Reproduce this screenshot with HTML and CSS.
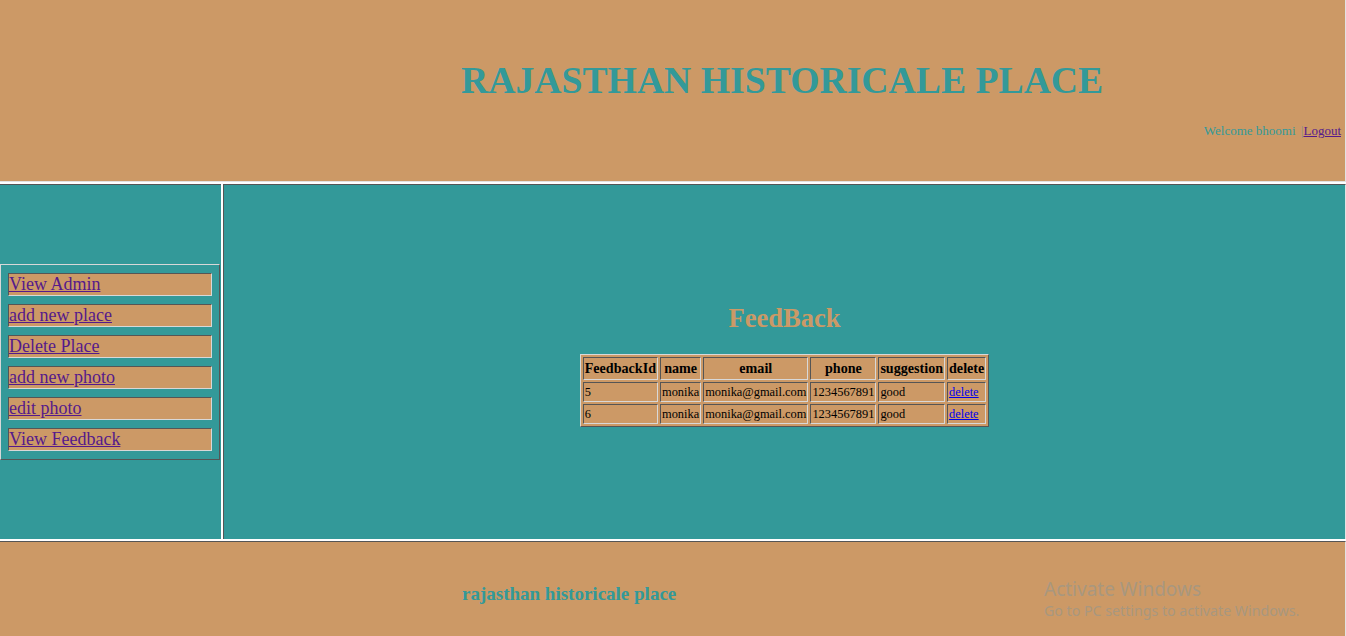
FILE: index.html
```html
<!DOCTYPE html>
<html>
<head>
<meta charset="utf-8">
<title>Rajasthan Historicale Place</title>
<link rel="stylesheet" href="styles.css">
</head>
<body>
<div class="page">
  <header class="header">
    <h1 class="site-title">RAJASTHAN HISTORICALE PLACE</h1>
    <div class="welcome">Welcome bhoomi <span class="sep">|</span><a href="#" class="logout">Logout</a></div>
  </header>
  <div class="middle">
    <aside class="side">
      <nav class="menu">
        <div class="menu-item"><a href="#">View Admin</a></div>
        <div class="menu-item"><a href="#">add new place</a></div>
        <div class="menu-item"><a href="#">Delete Place</a></div>
        <div class="menu-item"><a href="#">add new photo</a></div>
        <div class="menu-item"><a href="#">edit photo</a></div>
        <div class="menu-item"><a href="#">View Feedback</a></div>
      </nav>
    </aside>
    <main class="content">
      <h2 class="content-title">FeedBack</h2>
      <table class="fb">
        <thead>
          <tr><th>FeedbackId</th><th>name</th><th>email</th><th>phone</th><th>suggestion</th><th>delete</th></tr>
        </thead>
        <tbody>
          <tr><td>5</td><td>monika</td><td>monika@gmail.com</td><td>1234567891</td><td>good</td><td><a href="#" class="del">delete</a></td></tr>
          <tr><td>6</td><td>monika</td><td>monika@gmail.com</td><td>1234567891</td><td>good</td><td><a href="#" class="del">delete</a></td></tr>
        </tbody>
      </table>
    </main>
  </div>
  <footer class="footer">
    <div class="footer-text">rajasthan historicale place</div>
    <div class="activate">
      <div class="act-1">Activate Windows</div>
      <div class="act-2">Go to PC settings to activate Windows.</div>
    </div>
  </footer>
</div>
</body>
</html>
```

FILE: styles.css
```css
html, body {
  margin: 0;
  padding: 0;
  background: #ffffff;
}
body {
  font-family: "Liberation Serif", "Times New Roman", serif;
  width: 1346px;
  height: 636px;
  overflow: hidden;
}
.page {
  display: flex;
  flex-direction: column;
  gap: 2px;
  width: 1346px;
}
.header {
  background: #cc9966;
  height: 181px;
  border-bottom: 1px solid #e2e2e2;
  border-right: 1px solid #e2e2e2;
  box-sizing: content-box;
  width: 1345px;
}
.site-title {
  margin: 0;
  padding: 59px 0 0 461px;
  font-size: 37.7px;
  line-height: 43px;
  font-weight: bold;
  color: #339999;
  white-space: nowrap;
}
.welcome {
  margin-top: 21px;
  text-align: right;
  padding-right: 4px;
  font-size: 13px;
  line-height: 15px;
  color: #339999;
}
.sep {
  color: #8c8c8c;
  margin-left: 2px;
}
.logout {
  color: #551a8b;
}
.middle {
  display: flex;
  gap: 2px;
  height: 355px;
}
.side {
  width: 221px;
  background: #339999;
  border-top: 1px solid #555555;
  display: flex;
  align-items: center;
  box-sizing: border-box;
}
.menu {
  width: 220px;
  box-sizing: border-box;
  border: 1px solid;
  border-color: #d8d8d8 #555555 #555555 #d8d8d8;
  padding: 8px 7px;
  display: flex;
  flex-direction: column;
  gap: 8px;
  margin-bottom: 1px;
}
.menu-item {
  background: #cc9966;
  height: 23px;
  box-sizing: border-box;
  border: 1px solid;
  border-color: #555555 #d8d8d8 #d8d8d8 #555555;
  font-size: 18px;
  line-height: 21px;
  white-space: nowrap;
}
.menu-item a {
  color: #551a8b;
}
.content {
  flex: 1;
  background: #339999;
  border: 1px solid;
  border-color: #555555 #e2e2e2 #339999 #555555;
  border-bottom: none;
  display: flex;
  flex-direction: column;
  align-items: center;
  justify-content: center;
  box-sizing: border-box;
  padding-top: 5px;
}
.content-title {
  margin: 0 0 20px 0;
  font-size: 26.5px;
  line-height: 31px;
  color: #cc9966;
  font-weight: bold;
}
.fb {
  background: #cc9966;
  border-collapse: separate;
  border-spacing: 2px;
  border: 1px solid;
  border-color: #d8d8d8 #555555 #555555 #d8d8d8;
}
.fb th, .fb td {
  border: 1px solid;
  border-color: #555555 #d8d8d8 #d8d8d8 #555555;
  padding: 1px;
  white-space: nowrap;
  color: #000000;
}
.fb th {
  font-size: 14.1px;
  line-height: 19px;
  font-weight: bold;
  text-align: center;
}
.fb td {
  font-size: 12.4px;
  line-height: 16px;
  text-align: left;
}
.fb .del {
  color: #0000ee;
}
.footer {
  position: relative;
  background: #cc9966;
  border-top: 1px solid #555555;
  border-right: 1px solid #e2e2e2;
  height: 94px;
  width: 1345px;
  box-sizing: content-box;
}
.footer-text {
  padding: 41px 0 0 462px;
  font-size: 19px;
  line-height: 22px;
  font-weight: bold;
  color: #339999;
}
.activate {
  position: absolute;
  left: 1044px;
  top: 35px;
  font-family: "Noto Sans", "Open Sans", sans-serif;
  color: #a8977f;
  white-space: nowrap;
}
.act-1 {
  font-size: 19px;
  line-height: 24px;
}
.act-2 {
  font-size: 14.2px;
  line-height: 20px;
}
```
